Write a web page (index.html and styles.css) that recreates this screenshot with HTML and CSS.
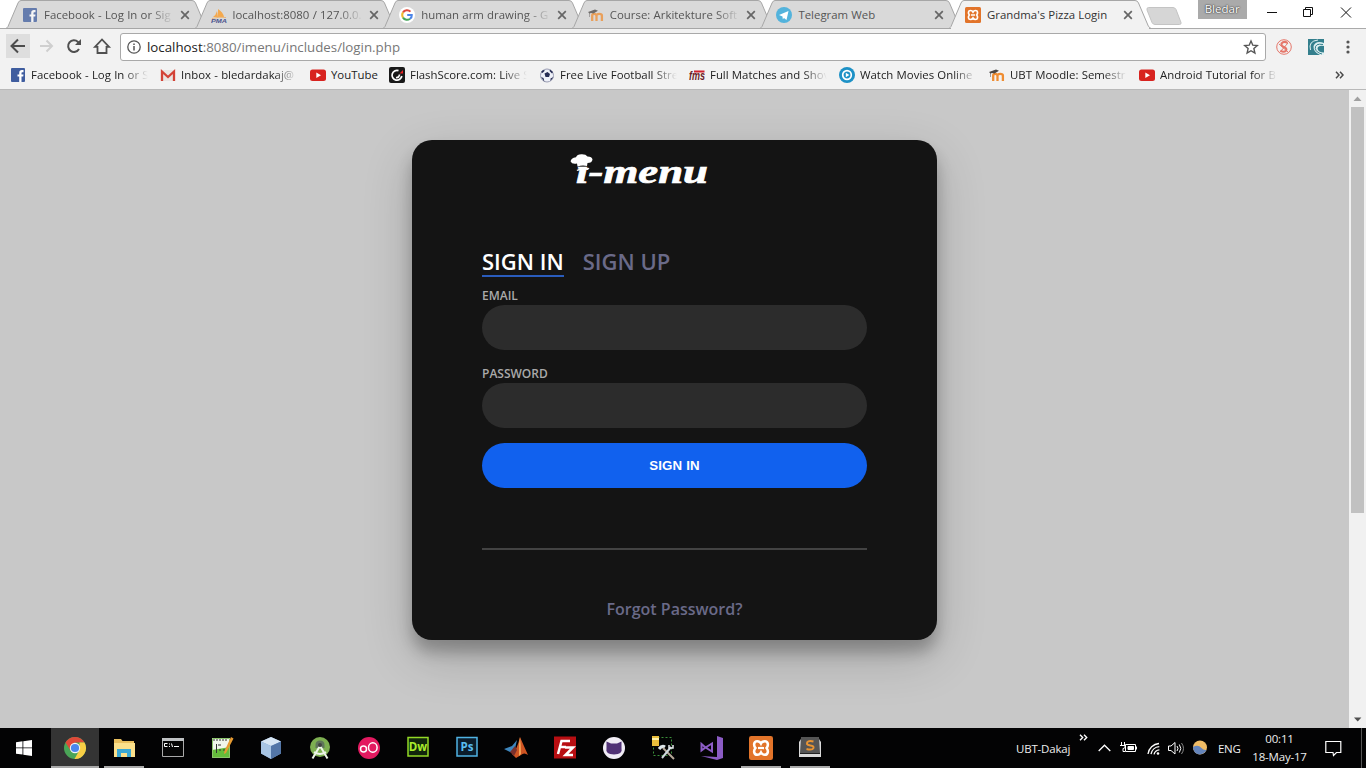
FILE: index.html
```html
<!DOCTYPE html>
<html lang="en">
<head>
<meta charset="utf-8">
<title>Grandma's Pizza Login</title>
<link rel="stylesheet" href="styles.css">
</head>
<body>
<svg class="defs" width="0" height="0">
  <defs>
    <symbol id="fb" viewBox="0 0 16 16"><rect x="1" y="1" width="14" height="14" rx="1" fill="#3f5d9f"/><path d="M9.2 15V9.6H7.5V7.4h1.7V5.9c0-1.9 1-2.8 2.7-2.8h1.6v2.1h-1c-.8 0-1 .4-1 1v1.2h2l-.3 2.2h-1.7V15z" fill="#fff"/></symbol>
    <symbol id="yt" viewBox="0 0 16 16"><rect y="2.5" width="16" height="11.500" rx="2.500" fill="#d8231f"/><path d="M6.300 5.500l4.700 2.700-4.700 2.700z" fill="#fff"/></symbol>
    <symbol id="moodle" viewBox="0 0 16 16"><path d="M4.200 14V8.500q0-1.700 2-1.700t2.300 1.700V14M8.500 8.500q0-1.700 2.700-1.700t2.700 1.700V14" fill="none" stroke="#ef8d32" stroke-width="2.300"/><path d="M0 5l7-2.500 3 1.200L5.500 6.500 3 6 1.500 6.500V10H1V6z" fill="#4b4744"/></symbol>
    <symbol id="xampp" viewBox="0 0 16 16"><rect width="16" height="16" rx="1.500" fill="#e2742a"/><path d="M5.500 3.500C3 3.500 3 6.500 4.300 8 3 9.500 3 12.500 5.500 12.500c1.700 0 2.500-1.500 2.500-1.500s.8 1.500 2.500 1.500c2.500 0 2.500-3 1.200-4.500C13 6.500 13 3.500 10.500 3.500 8.800 3.500 8 5 8 5S7.200 3.500 5.500 3.500z" fill="none" stroke="#fff" stroke-width="1.700"/><path d="M6 8h4" stroke="#fff" stroke-width="1.500"/></symbol>
    <symbol id="tabshape" viewBox="0 0 202 29"><path d="M0 28.500L2 26.500 12 3Q13 .5 15 .5H186Q188.500 .5 189.500 3L199.500 26.500 202 28.500z"/></symbol>
    <symbol id="close" viewBox="0 0 10 10"><path d="M1.200 1.200l7.600 7.600M8.800 1.200L1.200 8.800" stroke="#666" stroke-width="1.700"/></symbol>
  </defs>
</svg>

<header class="browser">
  <div class="tabstrip">
    <div class="tab"><svg class="shape"><use href="#tabshape"/></svg><svg class="ico dim"><use href="#fb"/></svg><span class="t fade">Facebook - Log In or Sig</span><svg class="x"><use href="#close"/></svg></div>
    <div class="tab"><svg class="shape"><use href="#tabshape"/></svg><svg class="ico" viewBox="0 0 16 16"><path d="M2 10Q5 8 6 4l1 6zM7 10V2q5 3 6 8z" fill="#f4a94e"/><path d="M1 11.500q7-2 14-1" stroke="#e9b77c" fill="none"/><text x="0" y="16" class="pma" textLength="16" lengthAdjust="spacingAndGlyphs">PMA</text></svg><span class="t fade">localhost:8080 / 127.0.0.</span><svg class="x"><use href="#close"/></svg></div>
    <div class="tab"><svg class="shape"><use href="#tabshape"/></svg><svg class="ico" viewBox="0 0 16 16"><circle cx="8" cy="8" r="8" fill="#fff"/><g fill="none" stroke-width="2"><path d="M11.500 4.600A4.800 4.800 0 0 0 4 5.400" stroke="#e04b3c"/><path d="M4 5.400A4.800 4.800 0 0 0 4 10.600" stroke="#efb92f"/><path d="M4 10.600A4.800 4.800 0 0 0 11 11.700" stroke="#45a55b"/><path d="M11 11.700Q13 10.300 12.800 8H8.200" stroke="#4c85e8"/></g></svg><span class="t fade">human arm drawing - G</span><svg class="x"><use href="#close"/></svg></div>
    <div class="tab"><svg class="shape"><use href="#tabshape"/></svg><svg class="ico dim"><use href="#moodle"/></svg><span class="t fade">Course: Arkitekture Soft</span><svg class="x"><use href="#close"/></svg></div>
    <div class="tab"><svg class="shape"><use href="#tabshape"/></svg><svg class="ico" viewBox="0 0 16 16"><circle cx="8" cy="8" r="8" fill="#53b3dc"/><path d="M3 8l9.500-4-2 9L8 11l-1.200 1.300L6.500 9.500z" fill="#fff"/></svg><span class="t">Telegram Web</span><svg class="x"><use href="#close"/></svg></div>
    <div class="tab active"><svg class="shape"><use href="#tabshape"/></svg><svg class="ico"><use href="#xampp"/></svg><span class="t">Grandma's Pizza Login</span><svg class="x"><use href="#close"/></svg></div>
    <svg class="newtab" viewBox="0 0 36 18"><path d="M2.500 .5H27q2 0 3 2l5 13q.5 2-1.500 2H9q-2 0-3-2L1 3Q.5 .5 2.500 .5z" fill="#d6d6d6" stroke="#c4c4c4"/></svg>
    <div class="user">Bledar</div>
    <svg class="winctl" viewBox="0 0 90 24" fill="none" stroke="#111"><path d="M1 12.500h10M37.500 9.500h7v7h-7zM39.500 9.500v-2h7v7h-2M75 7.500l10 10M85 7.500l-10 10"/></svg>
  </div>
  <div class="toolbar">
    <svg class="nav" viewBox="0 0 114 30" fill="none"><rect width="24" height="24" y="3" fill="#dedede"/><path d="M19 15H6M12 8.500L5.500 15 12 21.500" stroke="#4d4d4d" stroke-width="2"/><path d="M34 15h12M40.500 9.500L46 15l-5.500 5.500" stroke="#cfcfcf" stroke-width="2"/><path d="M73 18a5.800 5.800 0 1 1-1-7l1.500 1.500" stroke="#505050" stroke-width="2"/><path d="M75 8v6h-6z" fill="#505050"/><path d="M91.500 15.500V22h9v-6.500M89 15.800L96 8.500l7 7.300z" stroke="#505050" stroke-width="1.800"/><path d="M92.400 15h7.200v2h-7.200z" fill="#f2f2f2"/></svg>
    <div class="omnibox">
      <svg class="info" viewBox="0 0 14 14" fill="none" stroke="#555"><circle cx="7" cy="7" r="6.200" stroke-width="1.300"/><path d="M7 6v4.500M7 3.500V5" stroke-width="1.500"/></svg>
      <span class="url"><b>localhost</b>:8080/imenu/includes/login.php</span>
      <svg class="star" viewBox="0 0 16 16"><path d="M8 2l1.800 4.200 4.500.4-3.400 3 1 4.500L8 11.700l-3.900 2.400 1-4.500-3.400-3 4.500-.4z" fill="none" stroke="#555" stroke-width="1.400"/></svg>
    </div>
    <svg class="ext" viewBox="0 0 16 16" fill="none" stroke="#e5776b"><circle cx="8" cy="8" r="7.300"/><path d="M11.500 4Q8 1.500 5.500 4.500 5 7 8 8q3.500 1.500 2 3.800Q7.500 14 4.500 11.500" stroke-width="2"/><path d="M3 5l9 8M4 13l8-9"/></svg>
    <svg class="ext" viewBox="0 0 16 16" fill="none"><path d="M0 0h16v16H0z" fill="#347f8d"/><path d="M16 4Q8 1 5.500 7 5 13 12 16h4v-2.500q-6 0-6.500-4Q10 6 16 7z" fill="#dff0f2"/><path d="M10 1Q0 2 2.500 11M16 5.500Q7 3.500 7.300 9.500 8 14 15 15" stroke="#dff0f2"/><path d="M15 5.500Q7 4 7.300 9.500 8 13.500 14 15" stroke="#347f8d"/></svg>
    <svg class="menu" viewBox="0 0 4 14" fill="#555"><circle cx="2" cy="2" r="1.600"/><circle cx="2" cy="7" r="1.600"/><circle cx="2" cy="12" r="1.600"/></svg>
  </div>
  <nav class="bookmarks">
    <div class="bm"><svg class="ico"><use href="#fb"/></svg><span class="t fade">Facebook - Log In or S</span></div>
    <div class="bm"><svg class="ico" viewBox="0 0 16 16"><path d="M1 3h14v11H1z" fill="#e9e4e2"/><path d="M2 14V4.500L8 10l6-5.500V14" fill="none" stroke="#d34236" stroke-width="2.300"/></svg><span class="t fade">Inbox - bledardakaj@</span></div>
    <div class="bm short"><svg class="ico"><use href="#yt"/></svg><span class="t">YouTube</span></div>
    <div class="bm"><svg class="ico" viewBox="0 0 16 16"><rect width="16" height="16" rx="2" fill="#191919"/><path d="M9.500 3.600A4.900 4.900 0 1 0 12.800 9M10.500 7.500Q10 11 7 10.500" fill="none" stroke="#fff" stroke-width="1.700"/><path d="M10.500 6.500L14 3v3.500z" fill="#e22"/></svg><span class="t fade">FlashScore.com: Live S</span></div>
    <div class="bm"><svg class="ico" viewBox="0 0 16 16"><circle cx="8" cy="8.500" r="6.500" fill="#eef0f8" stroke="#9a9db3"/><path d="M5.500 6.500l3-1.500 2.500 2-1 3H6.500zM2 5l2-2 2 .5L3.500 6zM11 2.500L14 5l-1 1.500L10.500 4zM2 10l2.500 1 1 4zM14.500 10l-3 1.500V14z" fill="#272d54"/></svg><span class="t fade">Free Live Football Stre</span></div>
    <div class="bm"><svg class="ico" viewBox="0 0 16 16"><text x="0" y="13" class="fms" textLength="16" lengthAdjust="spacingAndGlyphs">fms</text><path d="M5 4.500h10.500" stroke="#d0202e" stroke-width="2"/></svg><span class="t fade">Full Matches and Shov</span></div>
    <div class="bm"><svg class="ico" viewBox="0 0 16 16"><circle cx="8" cy="8" r="8" fill="#1d91c6"/><circle cx="8" cy="8" r="4.300" fill="none" stroke="#fff" stroke-width="1.700"/><path d="M6.800 5.800L10.300 8l-3.500 2.200z" fill="#fff"/></svg><span class="t fade">Watch Movies Online</span></div>
    <div class="bm"><svg class="ico"><use href="#moodle"/></svg><span class="t fade">UBT Moodle: Semestr</span></div>
    <div class="bm"><svg class="ico"><use href="#yt"/></svg><span class="t fade">Android Tutorial for B</span></div>
    <svg class="more" viewBox="0 0 9 8" fill="none" stroke="#4a4a4a" stroke-width="1.500"><path d="M1 .8L4 4 1 7.200M5 .8L8 4 5 7.200"/></svg>
  </nav>
</header>

<div class="viewport">
  <main class="page">
    <section class="card">
      <svg class="logo" viewBox="0 0 142 36" fill="#fff">
        <path d="M7.500 13.500L7 10.500Q2 11.500 .6 8.500 .8 5 6 4.300 7 1 12 1.200q4 0 5.500 2.300 4.500 0 5 3-.5 3.500-5 3.500l-.5 3q-5-1-9.500 .5z"/>
        <path d="M6.500 17q6-3.500 13-2l-1.500 2q-6-1-10.500 1z"/>
        <text x="6" y="29.700" textLength="132" lengthAdjust="spacingAndGlyphs">ı-menu</text>
      </svg>
      <div class="modes"><a class="mode on">SIGN IN</a><a class="mode">SIGN UP</a></div>
      <form class="form">
        <label class="label" for="e">EMAIL</label><input class="field" id="e" type="text">
        <label class="label" for="p">PASSWORD</label><input class="field" id="p" type="password">
        <button class="submit" type="button">SIGN IN</button>
      </form>
      <div class="rule"></div>
      <a class="forgot">Forgot Password?</a>
    </section>
  </main>
  <div class="scrollbar">
    <svg class="arrow" viewBox="0 0 17 17"><path d="M4.500 11l4-4.500 4 4.500z" fill="#a0a0a0"/></svg>
    <div class="thumb"></div>
    <svg class="arrow end" viewBox="0 0 17 17"><path d="M5 6.500l3.700 4 3.700-4z" fill="#505050"/></svg>
  </div>
</div>

<footer class="taskbar">
  <div class="app start"><svg class="win" viewBox="0 0 16 16" fill="#fff"><path d="M0 2.200L6.500 1.300V7.500H0zM7.300 1.200L16 0v7.500H7.300zM0 8.300h6.500v6.300L0 13.700zM7.300 8.300H16V16l-8.700-1.200z"/></svg></div>
  <div class="app current"><svg class="a" viewBox="0 0 24 24"><circle cx="12" cy="12" r="11" fill="#4aa557"/><path d="M2.500 6.500A11 11 0 0 1 21.500 6.500H12L7.500 14.500z" fill="#df4939"/><path d="M21.500 6.500A11 11 0 0 1 11.500 23L16.500 14V6.500z" fill="#f8ce45"/><circle cx="12" cy="12" r="5.200" fill="#f4f4f4"/><circle cx="12" cy="12" r="4.100" fill="#4a86ed"/></svg></div>
  <div class="app open"><svg class="a" viewBox="0 0 24 24"><path d="M2 3h7l1.500 2H22v16H2z" fill="#e9bf5e"/><path d="M2 7h21v14H2z" fill="#fbe08b"/><path d="M5 21v-8h14v8h-4v-4H9v4z" fill="#3aa8d4"/></svg></div>
  <div class="app"><svg class="a" viewBox="0 0 24 24"><path d="M1.500 2.500h21v18h-21z" fill="#060606" stroke="#aaa"/><path d="M1 2h22v3H1z" fill="#bfc2c4"/><path d="M6.500 7.500h-3v3h3M8.500 7.500v1M8.500 10v1M10.500 7.500l1 3.500M13 10.500h5" stroke="#fff" fill="none"/></svg></div>
  <div class="app"><svg class="a" viewBox="0 0 24 24"><path d="M2 2h18v20H2z" fill="#f1f7ec"/><path d="M2 14l18-3v11H2z" fill="#64bd3b"/><path d="M2.500 2.500h17v19h-17z" fill="none" stroke="#8cc66c"/><path d="M4 3v2M7 3v2M10 3v2M13 3v2M16 3v2M6.500 8v9M8 9h3M9 14h2M13 14h2" stroke="#333"/><path d="M21 1l2.500 1.500L16 17l-2 1 .5-3z" fill="#e79b32"/></svg></div>
  <div class="app"><svg class="a" viewBox="0 0 24 24"><path d="M12 1l10 4.500v12L12 23 2 17.500v-12z" fill="#799ccb"/><path d="M12 1l10 4.500L12 10 2 5.500z" fill="#d7e6f4"/><path d="M2 5.500L12 10v13L2 17.500z" fill="#a8c5e4"/><path d="M22 5.500L12 10v13l10-5.500z" fill="#5376a7"/></svg></div>
  <div class="app"><svg class="a" viewBox="0 0 24 24"><circle cx="12" cy="11" r="10" fill="#7daf51"/><path d="M7.500 12V9q0-4.500 4.500-4.500T16.500 9v3z" fill="#5f765a"/><path d="M4.500 22.500L11 11.500h2l6.500 11M6 16q6 4 12 0" fill="none" stroke="#edf5e8" stroke-width="2"/><circle cx="12" cy="9" r="2" fill="#444"/></svg></div>
  <div class="app"><svg class="a" viewBox="0 0 24 24"><circle cx="12" cy="12" r="11" fill="#e31960"/><g fill="none" stroke="#fff" stroke-width="1.500"><circle cx="6.500" cy="13" r="3"/><ellipse cx="15.800" cy="11.500" rx="4.300" ry="4.700"/></g></svg></div>
  <div class="app"><svg class="a" viewBox="0 0 24 24"><path d="M2 1.500h20v18.500H2z" fill="#11260c" stroke="#93d926" stroke-width="1.500"/><text x="12" y="15" class="adobe green">Dw</text></svg></div>
  <div class="app"><svg class="a" viewBox="0 0 24 24"><path d="M2 1.500h20v18.500H2z" fill="#0b1c2b" stroke="#50b3e4" stroke-width="1.500"/><text x="12" y="15" class="adobe blue">Ps</text></svg></div>
  <div class="app"><svg class="a" viewBox="0 0 24 24"><path d="M0 13l8-3 5-6-3 13-4-1z" fill="#3e86bd"/><path d="M8 18q5-4 8-17 3 7 8 18-4-3-7 0l-5 3z" fill="#cf5523"/><path d="M16 1q1 8 1 17l-2 2V8z" fill="#f4a657"/><path d="M6 16l5-6 2 4-3 6z" fill="#7a302c"/></svg></div>
  <div class="app"><svg class="a" viewBox="0 0 24 24"><path d="M1 .5h22v22H1z" fill="#b80e12"/><path d="M5 18L8.500 5H17M7 11h6M12 11.500h8L12.500 19H20" fill="none" stroke="#fff" stroke-width="2.500"/></svg></div>
  <div class="app"><svg class="a" viewBox="0 0 24 24"><circle cx="12" cy="12" r="11" fill="#f1edf6"/><path d="M4.500 5.500L9 7.500h6l4.500-2v6q1.500 7-7.500 7t-7.500-7z" fill="#513276"/></svg></div>
  <div class="app"><svg class="a" viewBox="0 0 24 24" fill="none"><path d="M2.500 1.500h18v18h-18z" stroke="#3b913a" stroke-dasharray="2 2"/><path d="M1 0h7v10H1z" fill="#e9be3b"/><path d="M1 3h7" stroke="#fff1a8" stroke-width="2"/><path d="M8 13q3-4 6-2" stroke="#dfe6ea" stroke-width="3"/><path d="M12 12l11 11" stroke="#b7a99a" stroke-width="2"/><path d="M11 22l9-11" stroke="#cfd7de" stroke-width="2"/><path d="M18 9v3h4V9" stroke="#e5e9ec" stroke-width="1.500"/></svg></div>
  <div class="app"><svg class="a" viewBox="0 0 24 24"><path d="M17 0l6 2v20l-6 2-16-4 16 1z" fill="#8b5cc5"/><path d="M1.500 8v6.500l4-3L12 15.500V7.500l-6.500 4z" fill="none" stroke="#8b5cc5" stroke-width="2"/></svg></div>
  <div class="app open"><svg class="a"><use href="#xampp"/></svg></div>
  <div class="app open"><svg class="a" viewBox="0 0 24 24"><path d="M1 6l2-3h18l2 3v15H1z" fill="#dadada"/><path d="M3 1h18l1 16H2z" fill="#555"/><path d="M2 17h20v1H2z" fill="#222"/><path d="M15.500 5.500Q8.500 4 9 8q.5 1 3.500 1.500 3.500.5 3 2.500-1 2.500-7 1" fill="none" stroke="#e99433" stroke-width="2"/></svg></div>

  <div class="tray">
    <span class="net">UBT-Dakaj</span>
    <svg class="chev" viewBox="0 0 9 7" fill="none" stroke="#fff" stroke-width="1.400"><path d="M1 .8L3.700 3.500 1 6.200M5 .8l2.700 2.700L5 6.200"/></svg>
    <svg class="icons" viewBox="0 0 112 24" fill="none" stroke="#fff">
      <path d="M.7 15L6.500 9.200 12.300 15" stroke-width="1.300"/>
      <path d="M27.500 8.500h10v7h-10zM38.500 10.500v3M23.500 6v3M26.500 6v3M22 9.500h5v2q-1 1-2 1v3h2"/><path d="M30 10.500h5.500v3H30z" fill="#fff"/>
      <path d="M50 18A12 12 0 0 1 61 7.500M53 18.200a9 9 0 0 1 8.300-7.500M56 18.300a6 6 0 0 1 5.400-4.500" stroke-width="1.300"/><circle cx="60" cy="17.500" r="1.300" fill="#fff" stroke="none"/>
      <path d="M70.500 10v4.500H73l4 3.500V6.500L73 10zM79 10q2 2.500 0 5M81.300 8.500q3 4 0 8"/><path d="M83.500 7q4 5.500 0 11" stroke="#888"/>
      <g stroke="none"><circle cx="102" cy="11.500" r="7" fill="#f0bc65"/><path d="M95 11q5-3 8.500 1 2 2.500 5 2A7 7 0 0 1 95 11z" fill="#6585bc"/></g>
    </svg>
    <span class="lang">ENG</span>
    <div class="clock"><span class="time">00:11</span><span class="date">18-May-17</span></div>
    <svg class="note" viewBox="0 0 17 17"><path d="M.8 1.500h15v11H11.500L8.500 15.500 8 12.500H.8z" fill="none" stroke="#fff" stroke-width="1.200"/></svg>
    <div class="peek"></div>
  </div>
</footer>
</body>
</html>
```
FILE: styles.css
```css
* { box-sizing: border-box; }
body { margin: 0; width: 1366px; height: 768px; overflow: hidden; display: flex; flex-direction: column; font-family: "Open Sans", "Noto Sans", sans-serif; font-size: 11.5px; color: #222; }
svg { display: block; flex: none; }
.defs { position: absolute; }

.browser { height: 90px; background: #f2f2f2; border-bottom: 1px solid #b9b9b9; flex: none; }
.tabstrip { height: 29px; background: #fff; display: flex; padding-left: 6px; border-bottom: 1px solid #aaa; }
.tab { position: relative; width: 202px; height: 29px; margin-right: -13.400px; padding: 0 0 0 16px; display: flex; align-items: center; flex: none; color: #555; }
.shape { position: absolute; left: 0; top: 0; width: 202px; height: 29px; fill: #d9d9d9; stroke: #a6a6a6; }
.tab.active { z-index: 1; color: #333; }
.active .shape { fill: #f2f2f2; }
.active::after { content: ""; position: absolute; left: 2px; right: 2px; bottom: 0; height: 1px; background: #f2f2f2; }
.ico { position: relative; width: 16px; height: 16px; margin-right: 6px; }
.dim { opacity: .75; }
.t { position: relative; white-space: nowrap; overflow: hidden; line-height: 18px; }
.tab .t { width: 130px; font-size: 11.400px; word-spacing: .3px; }
.fade { -webkit-mask-image: linear-gradient(90deg, #000 calc(100% - 24px), transparent); mask-image: linear-gradient(90deg, #000 calc(100% - 24px), transparent); }
.x { position: relative; width: 10px; height: 10px; margin-left: 6px; }
.pma { font: italic bold 6px "Liberation Sans", sans-serif; fill: #4d558f; }
.newtab { width: 36px; height: 18px; margin: 7px 0 0 8px; }
.user { width: 49px; height: 19px; margin-left: 16px; background: #aaa; color: #fff; text-align: center; line-height: 18px; text-shadow: 0 0 2px #333, 0 0 1px #333; }
.winctl { width: 90px; height: 24px; margin-left: 19px; }

.toolbar { height: 33px; padding: 3px 0 0 6px; display: flex; align-items: center; }
.nav { width: 114px; height: 30px; margin-top: -2px; }
.omnibox { width: 1146px; height: 28px; background: #fff; border: 1px solid #a9a9a9; border-radius: 3px; display: flex; align-items: center; padding: 0 6px; margin-top: -1px; }
.info { width: 14px; height: 14px; }
.url { flex: 1; margin-left: 6px; font-size: 13.300px; color: #777; }
.url b { font-weight: 400; color: #222; }
.star { width: 16px; height: 16px; }
.ext { width: 16px; height: 16px; margin-left: 10px; }
.ext + .ext { margin-left: 16px; }
.menu { width: 4px; height: 14px; margin-left: 22px; }
.bookmarks { display: flex; align-items: center; height: 24px; padding-left: 10px; margin-top: 1px; }
.bm { width: 150px; display: flex; align-items: center; flex: none; }
.bm.short { width: 79px; }
.bm .ico { margin-right: 5px; }
.bm .t { width: 117px; font-size: 11.400px; word-spacing: .3px; }
.bm.short .t { width: auto; }
.more { width: 9px; height: 8px; margin-left: 46px; }

.viewport { flex: 1; display: flex; background: #c8c8c8; min-height: 0; }
.page { width: 1349px; display: flex; justify-content: center; align-items: flex-start; padding-top: 50px; overflow: hidden; }
.card { width: 525px; height: 500px; border-radius: 20px; background: #141414; box-shadow: 0 12px 15px rgba(0,0,0,.24), 0 17px 50px rgba(0,0,0,.19); padding: 13px 70px 0; display: flex; flex-direction: column; }
.logo { width: 142px; height: 36px; margin-left: 88px; }
.logo text { font: italic bold 33px "Liberation Serif", serif; stroke: #fff; stroke-width: .7px; }
.modes { display: flex; gap: 19px; margin-top: 57px; height: 31px; }
.mode { font-size: 22px; line-height: 30px; font-weight: 600; color: #6a6a88; height: 31px; }
.mode.on { color: #fff; border-bottom: 2px solid #2a5cbc; }
.form { display: flex; flex-direction: column; margin-top: 10px; }
.label { font-size: 12px; line-height: 18px; font-weight: 600; color: #aaa; }
.field { height: 45px; border: 0; border-radius: 25px; background: #2c2c2c; margin: 0 0 15px; padding: 15px 20px; color: #fff; }
.submit { height: 45px; border: 0; border-radius: 25px; background: #1161ee; color: #fff; font: bold 13.300px "Liberation Sans", Arial, sans-serif; letter-spacing: .15px; }
.rule { height: 2px; background: #434343; margin: 60px 0 48px; }
.forgot { text-align: center; font-size: 16px; font-weight: 600; line-height: 22px; color: #6a6a88; }
.scrollbar { width: 17px; background: #f1f1f1; display: flex; flex-direction: column; align-items: center; }
.arrow { width: 17px; height: 17px; }
.thumb { width: 13px; height: 406px; background: #c1c1c1; }
.end { margin-top: auto; }

.taskbar { height: 40px; flex: none; background: #030304; display: flex; gap: 1px; color: #eee; }
.app { width: 48px; height: 40px; flex: none; display: flex; justify-content: center; align-items: center; position: relative; }
.start { margin-right: 2px; }
.win { width: 16px; height: 16px; }
.a { width: 24px; height: 24px; }
.current { background: #343434; border-bottom: 2px solid #aaa; padding-top: 2px; }
.open::after { content: ""; position: absolute; left: 4px; right: 4px; bottom: 0; height: 2px; background: #aaa; }
.adobe { font: bold 11.500px "Open Sans", sans-serif; text-anchor: middle; }
.green { fill: #a9ed2d; }
.blue { fill: #58bdf0; }
.fms { font: italic bold 12px "Liberation Sans", sans-serif; fill: #6b1c26; }
.tray { flex: 1; display: flex; align-items: center; padding-left: 181px; }
.net { width: 63px; letter-spacing: -.2px; }
.chev { width: 9px; height: 7px; margin-bottom: 21px; }
.icons { width: 112px; height: 24px; margin-left: 10px; }
.lang { width: 30px; margin-left: 8px; letter-spacing: -.3px; }
.clock { width: 63px; display: flex; flex-direction: column; text-align: center; line-height: 18px; letter-spacing: -.2px; }
.note { width: 17px; height: 17px; margin-left: 14px; }
.peek { width: 1px; height: 40px; background: #555; margin-left: 19px; }
```
